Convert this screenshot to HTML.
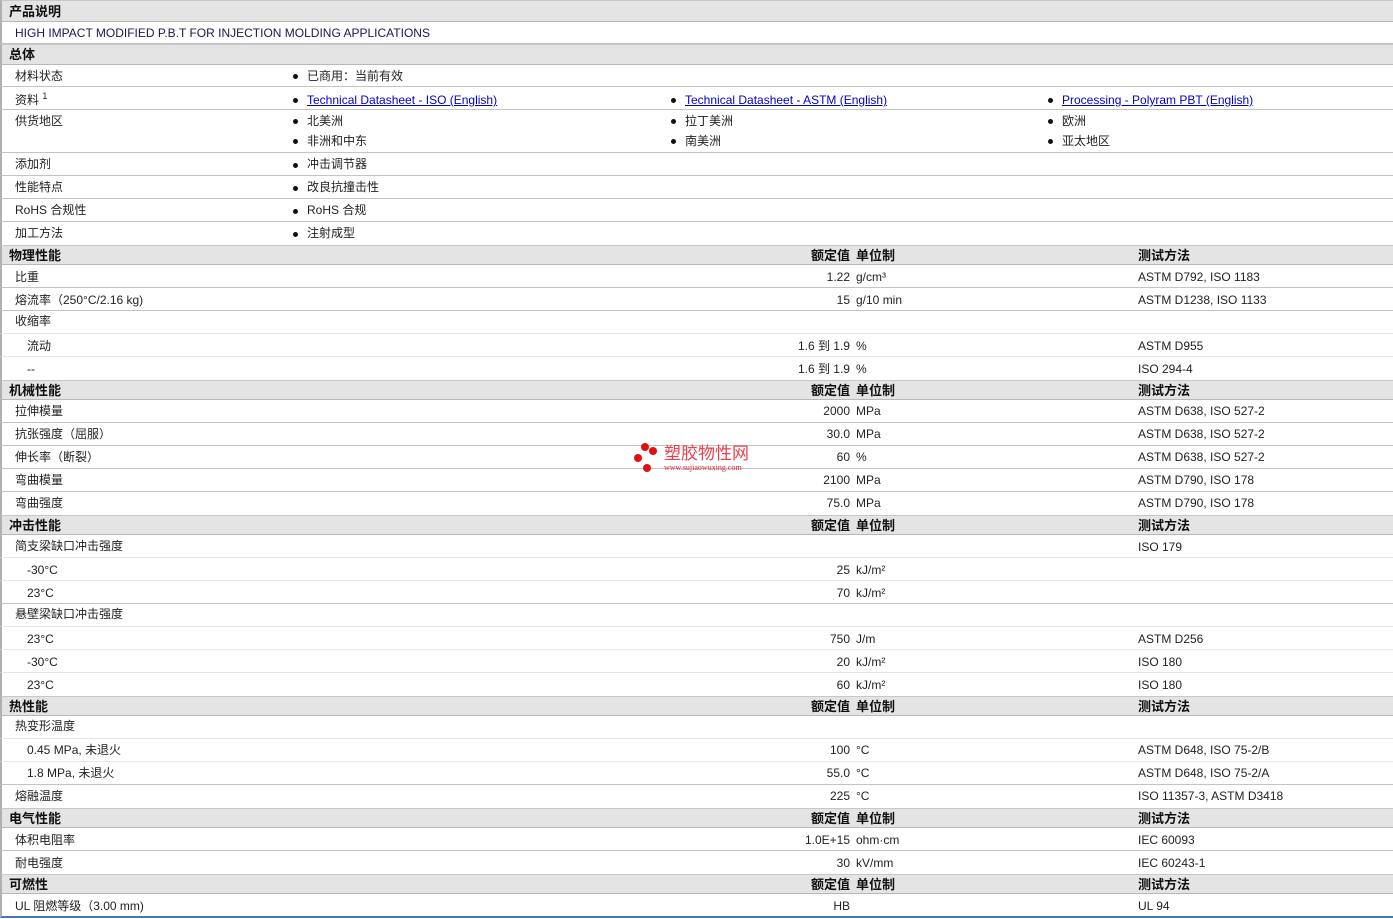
<!DOCTYPE html>
<html><head><meta charset="utf-8"><style>
body{margin:0;width:1393px;height:918px;background:#fff;position:relative;overflow:hidden;font-family:"Liberation Sans","Noto Sans CJK SC",sans-serif;font-size:12px;color:#222;}
.r{position:absolute;left:0;width:1393px;box-sizing:border-box;border-left:2px solid #b0b0b0;}
.h{background:#e4e4e4;font-weight:bold;color:#111;border-bottom:1px solid #b8b8b8;border-top:1px solid #c8c8c8;font-size:13px;}
.d{border-bottom:1px solid #c4c4c4;}
.s{border-bottom:1px solid #e6e6e6;}
.r span{position:absolute;white-space:nowrap;}
.v{right:543px;text-align:right;}
.u{left:854px}
.m{left:1136px}
.l{left:13px}
.l2{left:25px}
.hl{left:7px}
.b::before{content:"";position:absolute;left:-14px;top:50%;width:5px;height:5px;margin-top:-2px;border-radius:50%;background:#111;}
a{color:#00c;text-decoration:underline}
</style></head><body>
<div class="r h" style="top:0;height:22px;line-height:21px"><span class="hl">产品说明</span></div>
<div class="r d" style="top:22px;height:22px;line-height:22px"><span class="l" style="color:#1a1a4a">HIGH IMPACT MODIFIED P.B.T FOR INJECTION MOLDING APPLICATIONS</span></div>
<div class="r h" style="top:44px;height:21px;line-height:20px"><span class="hl">总体</span></div>
<div class="r d" style="top:65px;height:22px;line-height:22px"><span class="l">材料状态</span><span class="b" style="left:305px">已商用：当前有效</span></div>
<div class="r d" style="top:87px;height:23px;line-height:26px"><span class="l">资料 <sup style="font-size:9px;line-height:0">1</sup></span><span class="b" style="left:305px"><a>Technical Datasheet - ISO (English)</a></span><span class="b" style="left:683px"><a>Technical Datasheet - ASTM (English)</a></span><span class="b" style="left:1060px"><a>Processing - Polyram PBT (English)</a></span></div>
<div class="r d" style="top:110px;height:43px;line-height:22px"><span class="l">供货地区</span><span class="b" style="left:305px;top:0">北美洲</span><span class="b" style="left:683px;top:0">拉丁美洲</span><span class="b" style="left:1060px;top:0">欧洲</span><span class="b" style="left:305px;top:20px">非洲和中东</span><span class="b" style="left:683px;top:20px">南美洲</span><span class="b" style="left:1060px;top:20px">亚太地区</span></div>
<div class="r d" style="top:153px;height:23px;line-height:23px"><span class="l">添加剂</span><span class="b" style="left:305px">冲击调节器</span></div>
<div class="r d" style="top:176px;height:23px;line-height:23px"><span class="l">性能特点</span><span class="b" style="left:305px">改良抗撞击性</span></div>
<div class="r d" style="top:199px;height:23px;line-height:23px"><span class="l">RoHS 合规性</span><span class="b" style="left:305px">RoHS 合规</span></div>
<div class="r" style="top:222px;height:23px;line-height:23px"><span class="l">加工方法</span><span class="b" style="left:305px">注射成型</span></div>

<div class="r h" style="top:245px;height:20px;line-height:19px"><span class="hl">物理性能</span><span class="v">额定值</span><span class="u">单位制</span><span class="m">测试方法</span></div>
<div class="r d" style="top:265px;height:23px;line-height:24px"><span class="l">比重</span><span class="v">1.22</span><span class="u">g/cm³</span><span class="m">ASTM D792, ISO 1183</span></div>
<div class="r d" style="top:288px;height:23px;line-height:24px"><span class="l">熔流率（250°C/2.16 kg)</span><span class="v">15</span><span class="u">g/10 min</span><span class="m">ASTM D1238, ISO 1133</span></div>
<div class="r s" style="top:311px;height:23px;line-height:21px"><span class="l">收缩率</span></div>
<div class="r s" style="top:334px;height:23px;line-height:24px"><span class="l2">流动</span><span class="v">1.6 到 1.9</span><span class="u">%</span><span class="m">ASTM D955</span></div>
<div class="r" style="top:357px;height:23px;line-height:24px"><span class="l2">--</span><span class="v">1.6 到 1.9</span><span class="u">%</span><span class="m">ISO 294-4</span></div>

<div class="r h" style="top:380px;height:20px;line-height:19px"><span class="hl">机械性能</span><span class="v">额定值</span><span class="u">单位制</span><span class="m">测试方法</span></div>
<div class="r d" style="top:400px;height:23px;line-height:23px"><span class="l">拉伸模量</span><span class="v">2000</span><span class="u">MPa</span><span class="m">ASTM D638, ISO 527-2</span></div>
<div class="r d" style="top:423px;height:23px;line-height:23px"><span class="l">抗张强度（屈服）</span><span class="v">30.0</span><span class="u">MPa</span><span class="m">ASTM D638, ISO 527-2</span></div>
<div class="r d" style="top:446px;height:23px;line-height:23px"><span class="l">伸长率（断裂）</span><span class="v">60</span><span class="u">%</span><span class="m">ASTM D638, ISO 527-2</span></div>
<div class="r d" style="top:469px;height:23px;line-height:23px"><span class="l">弯曲模量</span><span class="v">2100</span><span class="u">MPa</span><span class="m">ASTM D790, ISO 178</span></div>
<div class="r" style="top:492px;height:23px;line-height:23px"><span class="l">弯曲强度</span><span class="v">75.0</span><span class="u">MPa</span><span class="m">ASTM D790, ISO 178</span></div>

<div class="r h" style="top:515px;height:20px;line-height:19px"><span class="hl">冲击性能</span><span class="v">额定值</span><span class="u">单位制</span><span class="m">测试方法</span></div>
<div class="r s" style="top:535px;height:23px;line-height:22px"><span class="l">简支梁缺口冲击强度</span><span class="m" style="line-height:25px">ISO 179</span></div>
<div class="r s" style="top:558px;height:23px;line-height:24px"><span class="l2">-30°C</span><span class="v">25</span><span class="u">kJ/m²</span></div>
<div class="r d" style="top:581px;height:23px;line-height:24px"><span class="l2">23°C</span><span class="v">70</span><span class="u">kJ/m²</span></div>
<div class="r s" style="top:604px;height:23px;line-height:21px"><span class="l">悬壁梁缺口冲击强度</span></div>
<div class="r s" style="top:627px;height:23px;line-height:24px"><span class="l2">23°C</span><span class="v">750</span><span class="u">J/m</span><span class="m">ASTM D256</span></div>
<div class="r s" style="top:650px;height:23px;line-height:24px"><span class="l2">-30°C</span><span class="v">20</span><span class="u">kJ/m²</span><span class="m">ISO 180</span></div>
<div class="r" style="top:673px;height:23px;line-height:24px"><span class="l2">23°C</span><span class="v">60</span><span class="u">kJ/m²</span><span class="m">ISO 180</span></div>

<div class="r h" style="top:696px;height:20px;line-height:19px"><span class="hl">热性能</span><span class="v">额定值</span><span class="u">单位制</span><span class="m">测试方法</span></div>
<div class="r s" style="top:716px;height:23px;line-height:21px"><span class="l">热变形温度</span></div>
<div class="r s" style="top:739px;height:23px;line-height:23px"><span class="l2">0.45 MPa, 未退火</span><span class="v">100</span><span class="u">°C</span><span class="m">ASTM D648, ISO 75-2/B</span></div>
<div class="r d" style="top:762px;height:23px;line-height:23px"><span class="l2">1.8 MPa, 未退火</span><span class="v">55.0</span><span class="u">°C</span><span class="m">ASTM D648, ISO 75-2/A</span></div>
<div class="r" style="top:785px;height:23px;line-height:23px"><span class="l">熔融温度</span><span class="v">225</span><span class="u">°C</span><span class="m">ISO 11357-3, ASTM D3418</span></div>

<div class="r h" style="top:808px;height:20px;line-height:19px"><span class="hl">电气性能</span><span class="v">额定值</span><span class="u">单位制</span><span class="m">测试方法</span></div>
<div class="r d" style="top:828px;height:23px;line-height:24px"><span class="l">体积电阻率</span><span class="v">1.0E+15</span><span class="u">ohm·cm</span><span class="m">IEC 60093</span></div>
<div class="r" style="top:851px;height:23px;line-height:24px"><span class="l">耐电强度</span><span class="v">30</span><span class="u">kV/mm</span><span class="m">IEC 60243-1</span></div>

<div class="r h" style="top:874px;height:20px;line-height:19px"><span class="hl">可燃性</span><span class="v">额定值</span><span class="u">单位制</span><span class="m">测试方法</span></div>
<div class="r" style="top:894px;height:24px;line-height:25px;border-bottom:2px solid #4a7aa8"><span class="l">UL 阻燃等级（3.00 mm)</span><span class="v">HB</span><span class="m">UL 94</span></div>

<div style="position:absolute;left:634px;top:442px;width:130px;height:34px">
<div style="position:absolute;left:7px;top:1px;width:8px;height:8px;border-radius:50%;background:#e01010"></div>
<div style="position:absolute;left:15px;top:5px;width:8px;height:8px;border-radius:50%;background:#e01010"></div>
<div style="position:absolute;left:0;top:12px;width:8px;height:8px;border-radius:50%;background:#e01010"></div>
<div style="position:absolute;left:9px;top:22px;width:8px;height:8px;border-radius:50%;background:#e01010"></div>
<div style="position:absolute;left:30px;top:2px;font-size:17px;line-height:20px;color:#e84050;white-space:nowrap">塑胶物性网</div>
<div style="position:absolute;left:30px;top:21px;font-size:8px;line-height:9px;color:#d02030;font-family:'Liberation Serif',serif;white-space:nowrap">www.sujiaowuxing.com</div>
</div>
</body></html>
